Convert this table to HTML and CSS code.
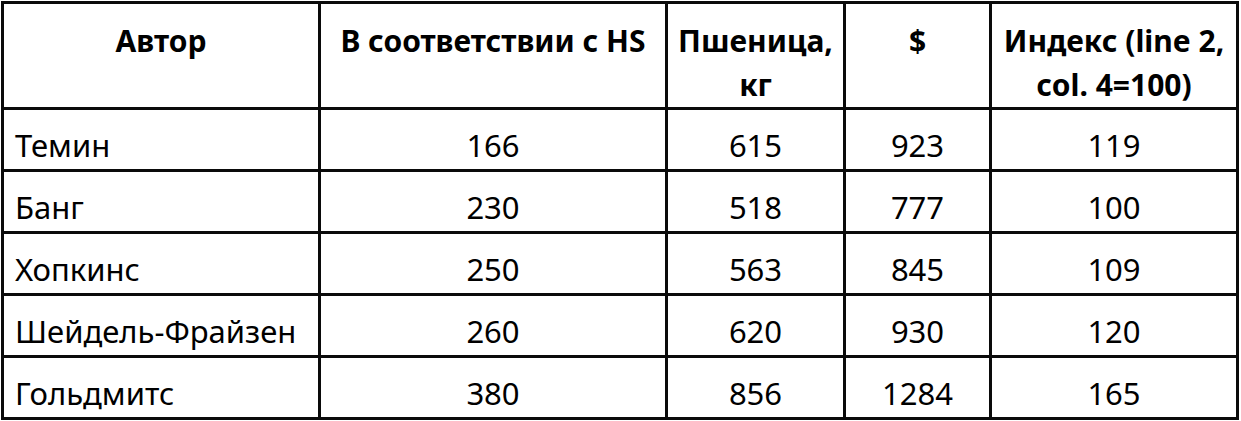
FILE: index.html
```
<!DOCTYPE html>
<html lang="ru">
<head>
<meta charset="utf-8">
<title>Таблица</title>
<link rel="stylesheet" href="styles.css">
</head>
<body>
<table class="data">
  <colgroup>
    <col class="c1"><col class="c2"><col class="c3"><col class="c4"><col class="c5">
  </colgroup>
  <thead>
    <tr>
      <th>Автор</th>
      <th>В соответствии с HS</th>
      <th>Пшеница,<br>кг</th>
      <th>$</th>
      <th>Индекс (line 2,<br>col. 4=100)</th>
    </tr>
  </thead>
  <tbody>
    <tr><td class="name">Темин</td><td>166</td><td>615</td><td>923</td><td>119</td></tr>
    <tr><td class="name">Банг</td><td>230</td><td>518</td><td>777</td><td>100</td></tr>
    <tr><td class="name">Хопкинс</td><td>250</td><td>563</td><td>845</td><td>109</td></tr>
    <tr><td class="name">Шейдель-Фрайзен</td><td>260</td><td>620</td><td>930</td><td>120</td></tr>
    <tr><td class="name">Гольдмитс</td><td>380</td><td>856</td><td>1284</td><td>165</td></tr>
  </tbody>
</table>
</body>
</html>
```
FILE: styles.css
```
html, body {
  margin: 0;
  padding: 0;
  background: #ffffff;
}

body {
  padding: 1px;
  font-family: "Noto Sans", "Open Sans", "DejaVu Sans", sans-serif;
  color: #000000;
}

.data {
  table-layout: fixed;
  width: 1238px;
  border-collapse: separate;
  border-spacing: 3px;
  background: #0a0a0a;
}

.c1 { width: 314px; }
.c2 { width: 344px; }
.c3 { width: 175px; }
.c4 { width: 143px; }
.c5 { width: 244px; }

.data th,
.data td {
  background: #ffffff;
  padding: 0;
  text-align: center;
}

.data th {
  height: 103px;
  vertical-align: top;
  padding-top: 15px;
  box-sizing: border-box;
  font-weight: 700;
  font-size: 30px;
  line-height: 44px;
}

.data td {
  height: 59px;
  vertical-align: top;
  font-size: 31px;
  line-height: 36px;
  padding-top: 17px;
  box-sizing: border-box;
}

.data td.name {
  text-align: left;
  padding-left: 11px;
}
```
